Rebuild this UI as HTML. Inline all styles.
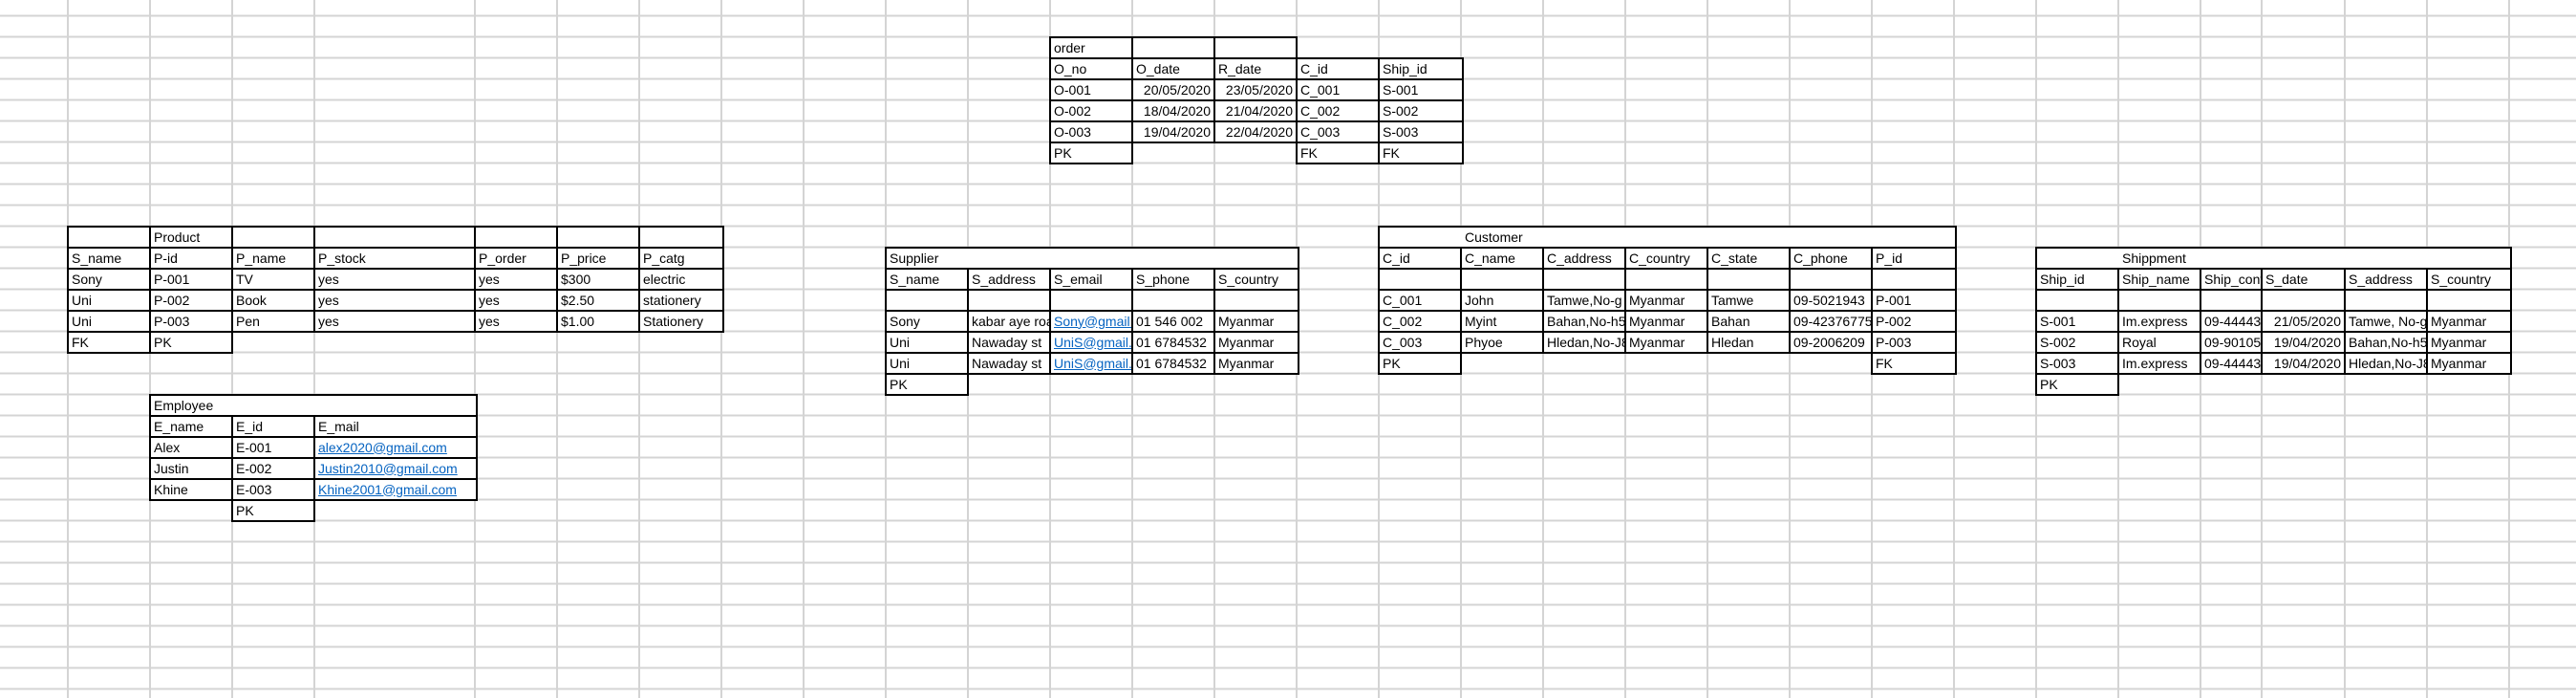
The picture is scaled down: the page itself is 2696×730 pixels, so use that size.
<!DOCTYPE html>
<html><head><meta charset="utf-8">
<style>
html,body{margin:0;padding:0;}
body{width:2696px;height:730px;position:relative;overflow:hidden;background:#fff;
background-image:repeating-linear-gradient(to bottom,#0000 0,#0000 15.5px,#d4d4d4 15.5px,#d4d4d4 17.5px,#0000 17.5px,#0000 22px);
font-family:"Liberation Sans",Arial,sans-serif;font-size:14px;color:#000;}
.v{position:absolute;top:0;height:730px;width:2px;background:#d4d4d4;}
table{position:absolute;border-collapse:collapse;table-layout:fixed;background:transparent;}
td{height:19px;padding:1px 0 0 3px;line-height:19px;white-space:nowrap;overflow:hidden;border:2px solid #000;vertical-align:top;background:#fff;}
td.n{border:none;background:transparent;}
td.r{text-align:right;padding-right:3px;padding-left:0;}
a{color:#0563C1;text-decoration:underline;}
tr{height:22px;}
</style></head><body>
<div class="v" style="left:70px"></div><div class="v" style="left:156px"></div><div class="v" style="left:242px"></div><div class="v" style="left:328px"></div><div class="v" style="left:496px"></div><div class="v" style="left:582px"></div><div class="v" style="left:668px"></div><div class="v" style="left:754px"></div><div class="v" style="left:840px"></div><div class="v" style="left:926px"></div><div class="v" style="left:1012px"></div><div class="v" style="left:1098px"></div><div class="v" style="left:1184px"></div><div class="v" style="left:1270px"></div><div class="v" style="left:1356px"></div><div class="v" style="left:1442px"></div><div class="v" style="left:1528px"></div><div class="v" style="left:1614px"></div><div class="v" style="left:1700px"></div><div class="v" style="left:1786px"></div><div class="v" style="left:1872px"></div><div class="v" style="left:1958px"></div><div class="v" style="left:2044px"></div><div class="v" style="left:2130px"></div><div class="v" style="left:2216px"></div><div class="v" style="left:2302px"></div><div class="v" style="left:2366px"></div><div class="v" style="left:2453px"></div><div class="v" style="left:2539px"></div><div class="v" style="left:2625px"></div>

<table style="left:1098px;top:37.5px;width:432px">
<colgroup><col style="width:86px"><col style="width:86px"><col style="width:86px"><col style="width:86px"><col style="width:88px"></colgroup>
<tr><td>order</td><td></td><td></td><td class="n"></td><td class="n"></td></tr>
<tr><td>O_no</td><td>O_date</td><td>R_date</td><td>C_id</td><td>Ship_id</td></tr>
<tr><td>O-001</td><td class="r">20/05/2020</td><td class="r">23/05/2020</td><td>C_001</td><td>S-001</td></tr>
<tr><td>O-002</td><td class="r">18/04/2020</td><td class="r">21/04/2020</td><td>C_002</td><td>S-002</td></tr>
<tr><td>O-003</td><td class="r">19/04/2020</td><td class="r">22/04/2020</td><td>C_003</td><td>S-003</td></tr>
<tr><td>PK</td><td class="n"></td><td class="n"></td><td>FK</td><td>FK</td></tr>
</table>

<table style="left:70px;top:235.5px;width:686px">
<colgroup><col style="width:86px"><col style="width:86px"><col style="width:86px"><col style="width:168px"><col style="width:86px"><col style="width:86px"><col style="width:88px"></colgroup>
<tr><td></td><td>Product</td><td></td><td></td><td></td><td></td><td></td></tr>
<tr><td>S_name</td><td>P-id</td><td>P_name</td><td>P_stock</td><td>P_order</td><td>P_price</td><td>P_catg</td></tr>
<tr><td>Sony</td><td>P-001</td><td>TV</td><td>yes</td><td>yes</td><td>$300</td><td>electric</td></tr>
<tr><td>Uni</td><td>P-002</td><td>Book</td><td>yes</td><td>yes</td><td>$2.50</td><td>stationery</td></tr>
<tr><td>Uni</td><td>P-003</td><td>Pen</td><td>yes</td><td>yes</td><td>$1.00</td><td>Stationery</td></tr>
<tr><td>FK</td><td>PK</td><td class="n"></td><td class="n"></td><td class="n"></td><td class="n"></td><td class="n"></td></tr>
</table>

<table style="left:156px;top:411.5px;width:342px">
<colgroup><col style="width:86px"><col style="width:86px"><col style="width:170px"></colgroup>
<tr><td colspan="3">Employee</td></tr>
<tr><td>E_name</td><td>E_id</td><td>E_mail</td></tr>
<tr><td>Alex</td><td>E-001</td><td><a>alex2020@gmail.com</a></td></tr>
<tr><td>Justin</td><td>E-002</td><td><a>Justin2010@gmail.com</a></td></tr>
<tr><td>Khine</td><td>E-003</td><td><a>Khine2001@gmail.com</a></td></tr>
<tr><td class="n"></td><td>PK</td><td class="n"></td></tr>
</table>

<table style="left:926px;top:257.5px;width:432px">
<colgroup><col style="width:86px"><col style="width:86px"><col style="width:86px"><col style="width:86px"><col style="width:88px"></colgroup>
<tr><td colspan="5">Supplier</td></tr>
<tr><td>S_name</td><td>S_address</td><td>S_email</td><td>S_phone</td><td>S_country</td></tr>
<tr><td></td><td></td><td></td><td></td><td></td></tr>
<tr><td>Sony</td><td>kabar aye road</td><td><a>Sony@gmail.com</a></td><td>01 546 002</td><td>Myanmar</td></tr>
<tr><td>Uni</td><td>Nawaday st</td><td><a>UniS@gmail.com</a></td><td>01 6784532</td><td>Myanmar</td></tr>
<tr><td>Uni</td><td>Nawaday st</td><td><a>UniS@gmail.com</a></td><td>01 6784532</td><td>Myanmar</td></tr>
<tr><td>PK</td><td class="n"></td><td class="n"></td><td class="n"></td><td class="n"></td></tr>
</table>

<table style="left:1442px;top:235.5px;width:604px">
<colgroup><col style="width:86px"><col style="width:86px"><col style="width:86px"><col style="width:86px"><col style="width:86px"><col style="width:86px"><col style="width:88px"></colgroup>
<tr><td colspan="7" style="padding-left:89px">Customer</td></tr>
<tr><td>C_id</td><td>C_name</td><td>C_address</td><td>C_country</td><td>C_state</td><td>C_phone</td><td>P_id</td></tr>
<tr><td></td><td></td><td></td><td></td><td></td><td></td><td></td></tr>
<tr><td>C_001</td><td>John</td><td>Tamwe,No-g</td><td>Myanmar</td><td>Tamwe</td><td>09-5021943</td><td>P-001</td></tr>
<tr><td>C_002</td><td>Myint</td><td>Bahan,No-h5</td><td>Myanmar</td><td>Bahan</td><td>09-42376775</td><td>P-002</td></tr>
<tr><td>C_003</td><td>Phyoe</td><td>Hledan,No-J8</td><td>Myanmar</td><td>Hledan</td><td>09-2006209</td><td>P-003</td></tr>
<tr><td>PK</td><td class="n"></td><td class="n"></td><td class="n"></td><td class="n"></td><td class="n"></td><td>FK</td></tr>
</table>

<table style="left:2130px;top:257.5px;width:497px">
<colgroup><col style="width:86px"><col style="width:86px"><col style="width:64px"><col style="width:87px"><col style="width:86px"><col style="width:88px"></colgroup>
<tr><td colspan="6" style="padding-left:89px">Shippment</td></tr>
<tr><td>Ship_id</td><td>Ship_name</td><td>Ship_contact</td><td>S_date</td><td>S_address</td><td>S_country</td></tr>
<tr><td></td><td></td><td></td><td></td><td></td><td></td></tr>
<tr><td>S-001</td><td>Im.express</td><td>09-444433</td><td class="r">21/05/2020</td><td>Tamwe, No-g</td><td>Myanmar</td></tr>
<tr><td>S-002</td><td>Royal</td><td>09-901055</td><td class="r">19/04/2020</td><td>Bahan,No-h5</td><td>Myanmar</td></tr>
<tr><td>S-003</td><td>Im.express</td><td>09-444433</td><td class="r">19/04/2020</td><td>Hledan,No-J8</td><td>Myanmar</td></tr>
<tr><td>PK</td><td class="n"></td><td class="n"></td><td class="n"></td><td class="n"></td><td class="n"></td></tr>
</table>
</body></html>
